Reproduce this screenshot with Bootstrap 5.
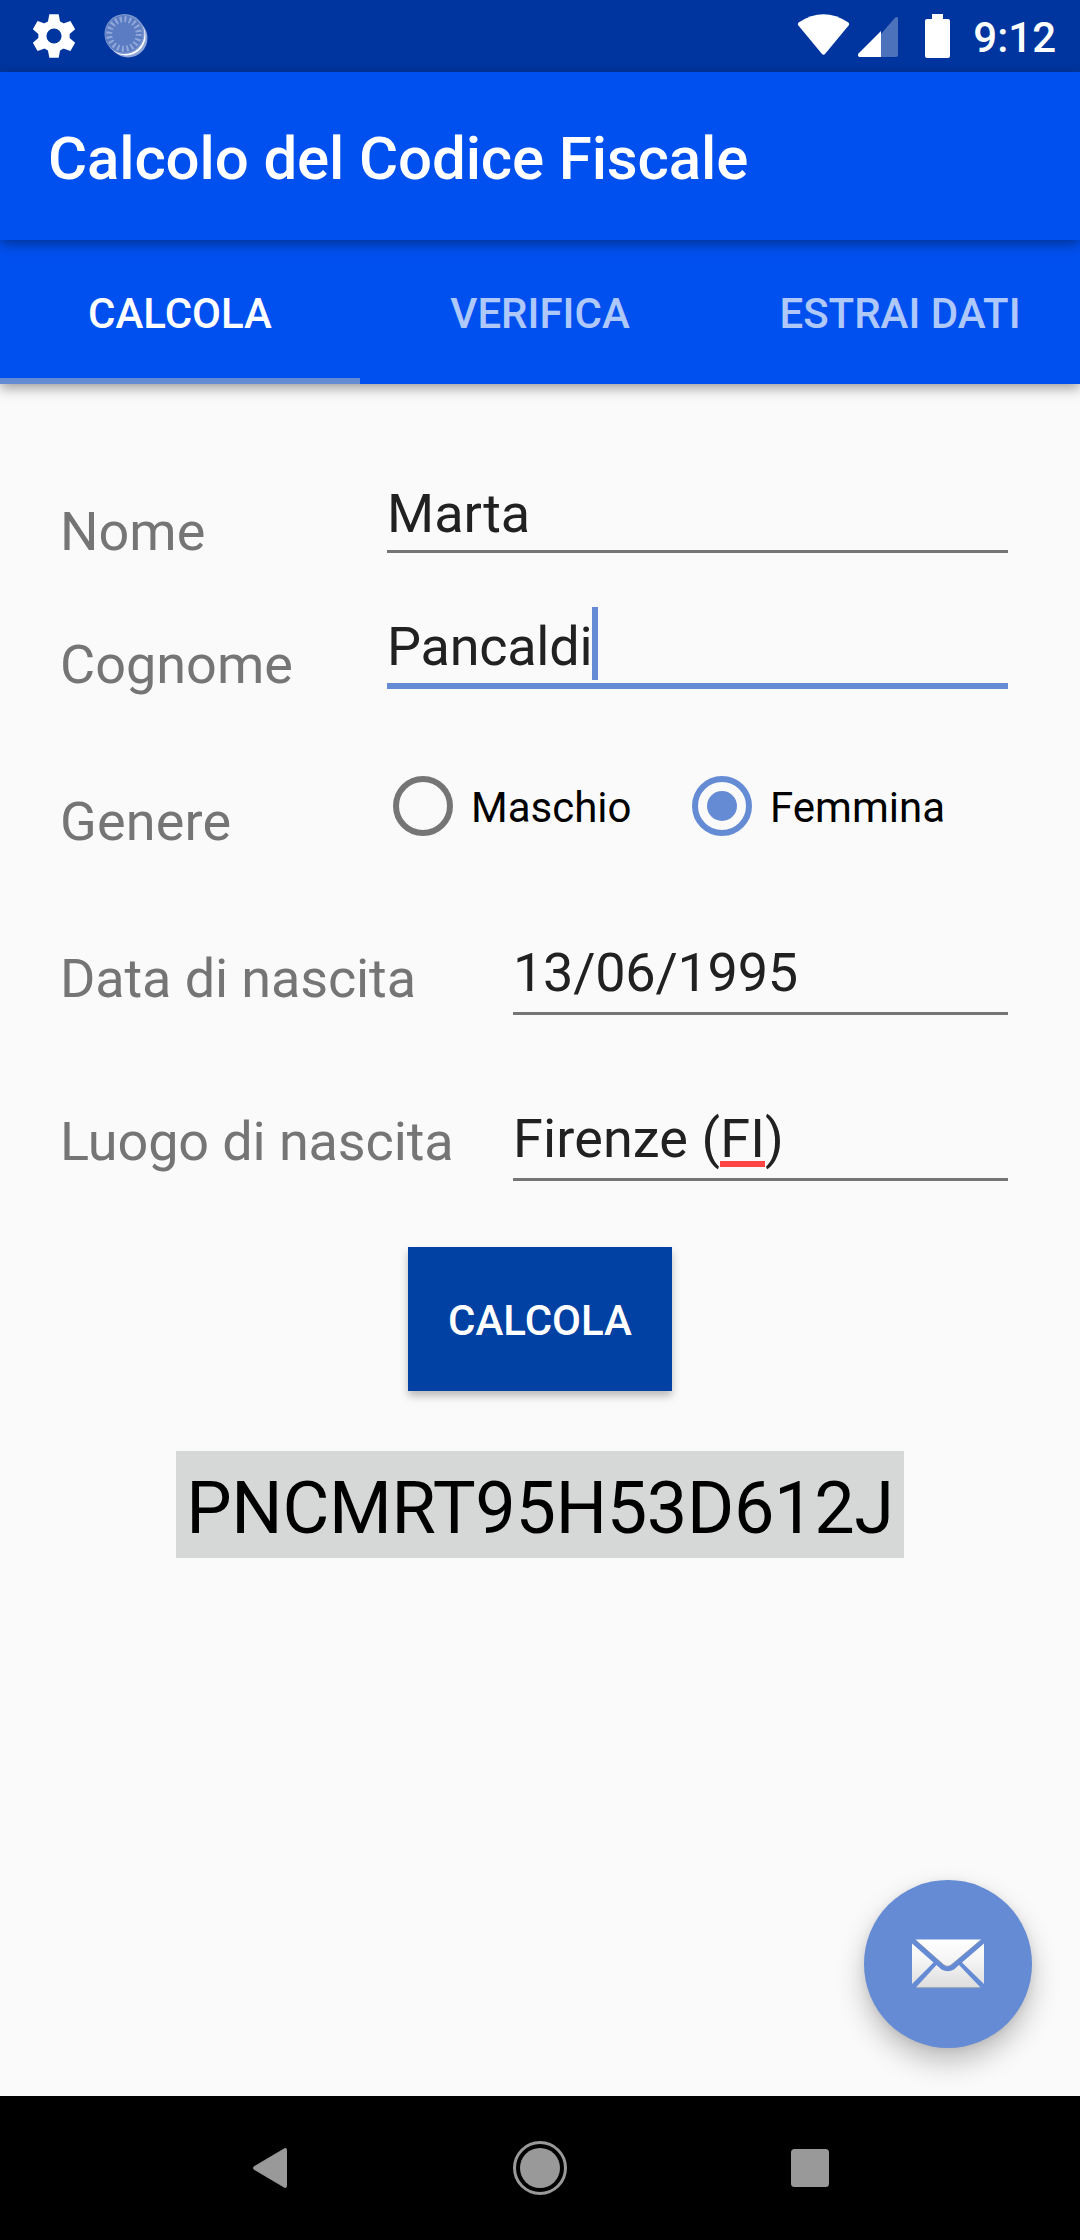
<!DOCTYPE html>
<html lang="it">
<head>
<meta charset="utf-8">
<meta name="viewport" content="width=device-width, initial-scale=1">
<title>Calcolo del Codice Fiscale</title>
<link href="https://cdn.jsdelivr.net/npm/bootstrap@5.3.0/dist/css/bootstrap.min.css" rel="stylesheet">
<style>
  :root { --accent: #658bd5; --primary: #0050f0; }
  body { width: 1080px; height: 2240px; overflow: hidden; background: #fafafa; font-family: Roboto, "Liberation Sans", sans-serif; font-size: 54px; line-height: 63px; color: #212121; }
  svg { display: block; flex: none; }
  .status-bar { height: 72px; background: #00359f; padding: 0 24px 0 32px; }
  .status-time { font-size: 42px; line-height: 69px; font-weight: 500; padding-top: 3px; margin-left: 23px; }
  .app-title { height: 168px; padding: 5px 48px 0; background: var(--primary); font-size: 60px; font-weight: 500; letter-spacing: -.13px; z-index: 2; box-shadow: 0 4px 12px rgba(0,0,0,.38); }
  .tab-strip { height: 144px; background: var(--primary); z-index: 1; box-shadow: 0 4px 12px rgba(0,0,0,.38); }
  .tab-strip .nav-link { height: 144px; line-height: 141px; padding: 3px 0 0; font-size: 42px; font-weight: 500; color: rgba(255,255,255,.7); border-radius: 0; }
  .tab-strip .nav-link.active { color: #fff; box-shadow: inset 0 -6px var(--accent); }
  .form-area { padding: 98px 72px 0 60px; }
  .field-label { color: #757575; white-space: nowrap; }
  .upper .field-label { width: 327px; padding-top: 18px; }
  .lower .field-label { width: 453px; letter-spacing: -.12px; }
  .field-value { border-bottom: 3px solid #757575; padding-bottom: 5px; white-space: nowrap; }
  .lower .field-value { padding-bottom: 8px; }
  .field-value.focused { border-bottom: 6px solid var(--accent); letter-spacing: -.25px; }
  .text-caret { top: -8px; right: -6px; width: 6px; height: 73px; background: var(--accent); }
  .row-surname { margin-top: 52px; }
  .row-gender { margin-top: 80px; }
  .row-gender .field-label { padding-top: 14px; width: 333px; letter-spacing: .15px; }
  .row-date { margin-top: 88px; }
  .row-date .field-label { padding-top: 6px; }
  .row-date .field-value { letter-spacing: -.25px; }
  .row-place { margin-top: 92px; }
  .row-place .field-label { padding-top: 3px; }
  .row-place .field-value { letter-spacing: .12px; }
  .radio-choice { height: 60px; font-size: 42px; color: #000; gap: 18px; }
  .radio-choice span { padding-top: 3px; }
  .radio-first { width: 299px; }
  .spell-mark { left: 0; right: 0; bottom: 3px; height: 6px; background: #ff4444; }
  .result-area { padding-left: 12px; }
  .btn-calc { width: 264px; height: 144px; margin-top: 66px; padding: 3px 0 0; border: 0; border-radius: 0; background: #0041a3; color: #fff; font-size: 42px; font-weight: 500; box-shadow: 0 5px 8px rgba(0,0,0,.26); }
  .code-box { width: 728px; height: 107px; margin-top: 60px; padding-top: 8px; background: #d6d7d7; color: #000; font-size: 72px; line-height: 99px; letter-spacing: -.32px; }
  .fab { right: 48px; bottom: 48px; width: 168px; height: 168px; background: var(--accent); box-shadow: 0 14px 28px rgba(0,0,0,.24), 0 2px 8px rgba(0,0,0,.08); }
  .nav-keys { height: 144px; background: #000; }
</style>
</head>
<body class="d-flex flex-column">
<header class="status-bar d-flex align-items-center text-white flex-shrink-0">
  <svg width="44" height="46" viewBox="-22 -23 44 46" fill="#fff">
    <defs><path id="tooth" d="M-6.5-12L-4.7-21.7H4.7L6.5-12Z"/></defs>
    <path fill-rule="evenodd" d="M0-15.7A15.7 15.7 0 1 1 0 15.7 15.7 15.7 0 0 1 0-15.7ZM0-7.6A7.6 7.6 0 1 0 0 7.6 7.6 7.6 0 0 0 0-7.6Z"/>
    <use href="#tooth"/><use href="#tooth" transform="rotate(60)"/><use href="#tooth" transform="rotate(120)"/><use href="#tooth" transform="rotate(180)"/><use href="#tooth" transform="rotate(240)"/><use href="#tooth" transform="rotate(300)"/>
  </svg>
  <svg class="ms-4" width="52" height="46" viewBox="100 13 52 46">
    <circle cx="128" cy="38" r="19.5" fill="#8da6d7"/>
    <circle cx="126" cy="36" r="19.5" fill="#fff"/>
    <circle cx="124.5" cy="34" r="20" fill="#7f9ad0"/>
    <circle cx="124" cy="34" r="18.8" fill="#5b7bc2"/>
    <circle cx="124" cy="34" r="14.8" fill="none" stroke="#91a8da" stroke-width="6" stroke-dasharray="2 2.65"/>
  </svg>
  <svg class="ms-auto" width="153" height="46" viewBox="797 13 153 46" fill="#fff">
    <path d="M798.6 22.6Q823.500 6 848.4 22.6Q849.700 24 848.600 25.500L825 54Q823.500 55.600 822 54L798.400 25.500Q797.300 24 798.600 22.600Z"/>
    <path d="M881 34L895 17.8Q898 15.500 898 19V55Q898 57 896 57H881Z" opacity=".3"/>
    <path d="M881 31V57H859.500Q857 56 858.500 53.500Z"/>
    <path d="M932 14H943V19H948Q950 19 950 21V56Q950 58 948 58H927Q925 58 925 56V21Q925 19 927 19H932Z"/>
  </svg>
  <div class="status-time">9:12</div>
</header>
<div class="app-title d-flex align-items-center position-relative text-white flex-shrink-0">Calcolo del Codice Fiscale</div>
<nav class="tab-strip nav nav-fill flex-nowrap position-relative flex-shrink-0">
  <a class="nav-link active col-4" href="#">CALCOLA</a>
  <a class="nav-link col-4" href="#">VERIFICA</a>
  <a class="nav-link col-4" href="#">ESTRAI DATI</a>
</nav>
<main class="form-area flex-grow-1 position-relative">
  <div class="upper d-flex align-items-start">
    <div class="field-label">Nome</div>
    <div class="field-value flex-grow-1">Marta</div>
  </div>
  <div class="upper row-surname d-flex align-items-start">
    <div class="field-label">Cognome</div>
    <div class="field-value focused flex-grow-1"><span class="position-relative d-inline-block">Pancaldi<i class="text-caret position-absolute"></i></span></div>
  </div>
  <div class="row-gender d-flex align-items-start">
    <div class="field-label">Genere</div>
    <div class="radio-choice radio-first d-flex align-items-center">
      <svg width="60" height="60"><circle cx="30" cy="30" r="27" fill="none" stroke="#757575" stroke-width="6"/></svg><span>Maschio</span>
    </div>
    <div class="radio-choice d-flex align-items-center">
      <svg width="60" height="60"><circle cx="30" cy="30" r="27" fill="none" stroke="#658bd5" stroke-width="6"/><circle cx="30" cy="30" r="15" fill="#658bd5"/></svg><span>Femmina</span>
    </div>
  </div>
  <div class="lower row-date d-flex align-items-start">
    <div class="field-label">Data di nascita</div>
    <div class="field-value flex-grow-1">13/06/1995</div>
  </div>
  <div class="lower row-place d-flex align-items-start">
    <div class="field-label">Luogo di nascita</div>
    <div class="field-value flex-grow-1">Firenze (<span class="position-relative d-inline-block">FI<i class="spell-mark position-absolute"></i></span>)</div>
  </div>
  <div class="result-area d-flex flex-column align-items-center">
    <button type="button" class="btn btn-calc">CALCOLA</button>
    <div class="code-box text-center">PNCMRT95H53D612J</div>
  </div>
  <button type="button" class="fab btn rounded-circle border-0 p-0 position-absolute d-flex align-items-center justify-content-center" aria-label="Invia">
    <svg width="72" height="50" viewBox="0 0 72 50">
      <defs><linearGradient id="paper" gradientUnits="userSpaceOnUse" x1="0" y1="0" x2="0" y2="50"><stop offset="0" stop-color="#fff"/><stop offset=".45" stop-color="#f4f4f4"/><stop offset="1" stop-color="#dcdcdc"/></linearGradient></defs>
      <g fill="url(#paper)"><path d="M3.500 .5H69L39 26Q35.500 28.500 32 26Z"/><path d="M0 4.500L21.500 23.500 0 45Z"/><path d="M72 4.500L50 23.500 72 45Z"/><path d="M24.500 26L29.500 30.500Q35.500 34 42 30.500L47 26 68.500 48.500H4Z"/></g>
      <g fill="none" stroke="#8b94a6" stroke-width="1" opacity=".65"><path d="M4 1.500L32 26Q35.500 28.500 39 26L68.500 1.500M4 49H68"/></g>
    </svg>
  </button>
</main>
<footer class="nav-keys d-flex align-items-center justify-content-center flex-shrink-0">
  <svg width="576" height="56" viewBox="252 2140 576 56" fill="#999" overflow="visible">
    <path d="M284 2148.500Q287 2147 287 2150.500V2185.500Q287 2189 284 2187.500L254.500 2170Q251.500 2168 254.500 2166Z"/>
    <circle cx="540" cy="2168" r="20"/><circle cx="540" cy="2168" r="25.500" fill="none" stroke="#999" stroke-width="3"/>
    <rect x="791" y="2149" width="38" height="38" rx="3.500"/>
  </svg>
</footer>
</body>
</html>
